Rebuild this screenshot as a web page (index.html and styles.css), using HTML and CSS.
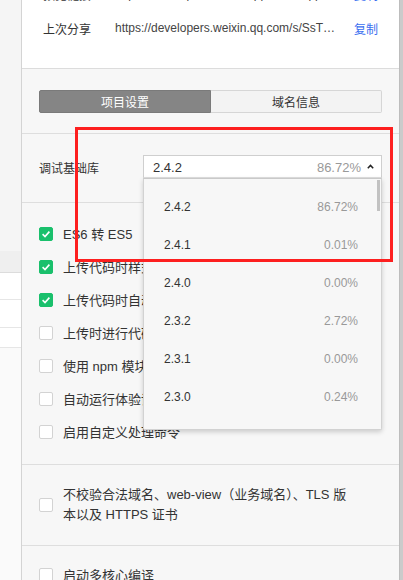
FILE: index.html
```html
<!DOCTYPE html>
<html lang="zh">
<head>
<meta charset="utf-8">
<link rel="stylesheet" href="styles.css">
</head>
<body>
<div class="page">
  <div class="side">
    <div class="side-top"></div>
    <div class="side-head"></div>
    <div class="side-row r1"></div>
    <div class="side-row r2"></div>
    <div class="side-row r3"></div>
    <div class="side-rest"></div>
  </div>
  <div class="panel">
    <section class="share">
      <div class="share-row">
        <span class="share-label">预览链接</span>
        <span class="share-url">https://developers.weixin.qq.com/s/app…</span>
        <a class="share-copy">复制</a>
      </div>
      <div class="share-row">
        <span class="share-label">上次分享</span>
        <span class="share-url">https://developers.weixin.qq.com/s/SsT…</span>
        <a class="share-copy">复制</a>
      </div>
    </section>
    <section class="tabs-sec">
      <div class="tabs">
        <div class="tab active">项目设置</div>
        <div class="tab">域名信息</div>
      </div>
    </section>
    <section class="lib-sec">
      <span class="lib-label">调试基础库</span>
      <div class="select">
        <div class="select-box">
          <span class="sel-ver">2.4.2</span>
          <span class="sel-pct">86.72%</span>
          <svg class="caret" width="7" height="5" viewBox="0 0 7 5"><path d="M0.8 4.2 L3.5 1.4 L6.2 4.2" fill="none" stroke="#222" stroke-width="1.5"/></svg>
        </div>
        <div class="dropdown">
          <ul class="opts">
            <li><span>2.4.2</span><span class="pct">86.72%</span></li>
            <li><span>2.4.1</span><span class="pct">0.01%</span></li>
            <li><span>2.4.0</span><span class="pct">0.00%</span></li>
            <li><span>2.3.2</span><span class="pct">2.72%</span></li>
            <li><span>2.3.1</span><span class="pct">0.00%</span></li>
            <li><span>2.3.0</span><span class="pct">0.24%</span></li>
            <li><span>2.2.5</span><span class="pct">3.49%</span></li>
          </ul>
          <div class="scroll-thumb"></div>
        </div>
      </div>
    </section>
    <section class="checks">
      <div class="check"><span class="box on"><svg width="14" height="14" viewBox="0 0 14 14"><path d="M3.6 7.2 L6 9.5 L10.4 4.6" fill="none" stroke="#fff" stroke-width="1.6"/></svg></span><span>ES6 转 ES5</span></div>
      <div class="check"><span class="box on"><svg width="14" height="14" viewBox="0 0 14 14"><path d="M3.6 7.2 L6 9.5 L10.4 4.6" fill="none" stroke="#fff" stroke-width="1.6"/></svg></span><span>上传代码时样式自动补全</span></div>
      <div class="check"><span class="box on"><svg width="14" height="14" viewBox="0 0 14 14"><path d="M3.6 7.2 L6 9.5 L10.4 4.6" fill="none" stroke="#fff" stroke-width="1.6"/></svg></span><span>上传代码时自动压缩</span></div>
      <div class="check"><span class="box"></span><span>上传时进行代码保护</span></div>
      <div class="check"><span class="box"></span><span>使用 npm 模块</span></div>
      <div class="check"><span class="box"></span><span>自动运行体验评分</span></div>
      <div class="check"><span class="box"></span><span>启用自定义处理命令</span></div>
    </section>
    <section class="checks-2">
      <div class="check multi"><span class="box"></span><span class="multi-text">不校验合法域名、web-view（业务域名）、TLS 版<br>本以及 HTTPS 证书</span></div>
    </section>
    <section class="checks-3">
      <div class="check"><span class="box"></span><span>启动多核心编译</span></div>
    </section>
  </div>
  <div class="gutter"></div>
  <div class="mark"></div>
</div>
</body>
</html>
```
FILE: styles.css
```css
* { box-sizing: border-box; }
html, body { margin: 0; padding: 0; }
body {
  width: 403px;
  height: 580px;
  overflow: hidden;
  font-family: "Liberation Sans", "Noto Sans CJK SC", sans-serif;
  font-size: 12px;
  color: #333;
  background: #f5f5f5;
}
.page {
  position: relative;
  display: flex;
  height: 580px;
  overflow: hidden;
}
.side {
  width: 21px;
  flex: none;
  display: flex;
  flex-direction: column;
}
.side-top { height: 251px; background: #f5f5f5; }
.side-head { height: 22px; background: #efefef; border-bottom: 1px solid #dcdcdc; }
.side-row { background: #fff; border-bottom: 1px solid #e6e6e6; }
.side-row.r1 { height: 27px; }
.side-row.r2 { height: 28px; }
.side-row.r3 { height: 20px; }
.side-rest { flex: 1; background: #fafafa; }

.panel {
  flex: 1;
  background: #f7f7f7;
  border-left: 1px solid #d4d4d4;
  display: flex;
  flex-direction: column;
  min-width: 0;
}
.gutter {
  width: 4px;
  flex: none;
  background: #cbcbcb;
  border-left: 1px solid #bdbdbd;
}

/* share block */
.share {
  background: #fff;
  border-bottom: 1px solid #dcdcdc;
  margin-top: -23px;
  padding-bottom: 23px;
}
.share-row {
  display: flex;
  align-items: center;
  height: 34px;
  padding: 0 21px 0 21px;
  white-space: nowrap;
}
.share-label { width: 72px; flex: none; color: #333; }
.share-url { flex: 1; color: #444; overflow: hidden; }
.share-copy { color: #3a6ff0; flex: none; margin-left: 8px; }

/* tabs */
.tabs-sec {
  padding: 21px 17px 20px;
  border-bottom: 1px solid #dedede;
}
.tabs {
  display: flex;
  height: 23px;
}
.tab {
  flex: 1;
  display: flex;
  align-items: center;
  justify-content: center;
  background: #f3f3f3;
  border: 1px solid #d6d6d6;
  border-left: none;
  border-radius: 0 2px 2px 0;
  color: #333;
}
.tab.active {
  background: #858585;
  border: 1px solid #7a7a7a;
  border-radius: 2px 0 0 2px;
  color: #fff;
}

/* lib select */
.lib-sec {
  display: flex;
  align-items: center;
  padding: 21px 17px 24px;
  border-bottom: 1px solid #dedede;
}
.lib-label { width: 104px; flex: none; margin-top: 2px; }
.select {
  flex: 1;
  position: relative;
}
.select-box {
  height: 23px;
  display: flex;
  align-items: center;
  background: #fff;
  border: 1px solid #cfcfcf;
  border-bottom-color: #e0e0e0;
  padding: 2px 7px 0 9px;
  font-size: 13px;
}
.sel-ver { flex: 1; color: #333; }
.sel-pct { color: #999; }
.caret { margin-left: 6px; margin-top: -3px; }

.dropdown {
  position: absolute;
  left: 0;
  top: 23px;
  width: 100%;
  height: 252px;
  background: #f7f7f7;
  border: 1px solid #d2d2d2;
  border-top-color: #c9c9c9;
  box-shadow: 0 2px 5px rgba(0,0,0,0.18);
  border-radius: 0 0 2px 2px;
  overflow: hidden;
  z-index: 5;
}
.opts {
  list-style: none;
  margin: 0;
  padding: 9px 23px 0 20px;
}
.opts li {
  height: 38px;
  display: flex;
  align-items: center;
  justify-content: space-between;
  color: #333;
}
.opts .pct { color: #999; }
.scroll-thumb {
  position: absolute;
  right: 1px;
  top: 1px;
  width: 3px;
  height: 31px;
  background: #c2c2c2;
}

/* checkboxes */
.checks {
  padding: 14px 17px 16px;
  border-bottom: 1px solid #dedede;
}
.check {
  height: 33px;
  display: flex;
  align-items: center;
  gap: 10px;
  color: #333;
  white-space: nowrap;
  font-size: 13px;
}
.box {
  width: 14px;
  height: 14px;
  flex: none;
  background: #fff;
  border: 1px solid #d3d3d3;
  border-radius: 2px;
  display: flex;
}
.box.on {
  background: #1ac06c;
  border-color: #1ac06c;
}
.box.on svg { margin: -1px; }
.checks-2 {
  padding: 20px 17px 20px;
  border-bottom: 1px solid #dedede;
}
.check.multi {
  height: 40px;
  line-height: 20px;
}
.multi-text { white-space: nowrap; }
.checks-3 {
  padding: 12px 17px 0;
}

/* annotation */
.mark {
  position: absolute;
  left: 75px;
  top: 127px;
  width: 318px;
  height: 135px;
  border: 3px solid #fd1f1f;
  z-index: 10;
  pointer-events: none;
}
```
